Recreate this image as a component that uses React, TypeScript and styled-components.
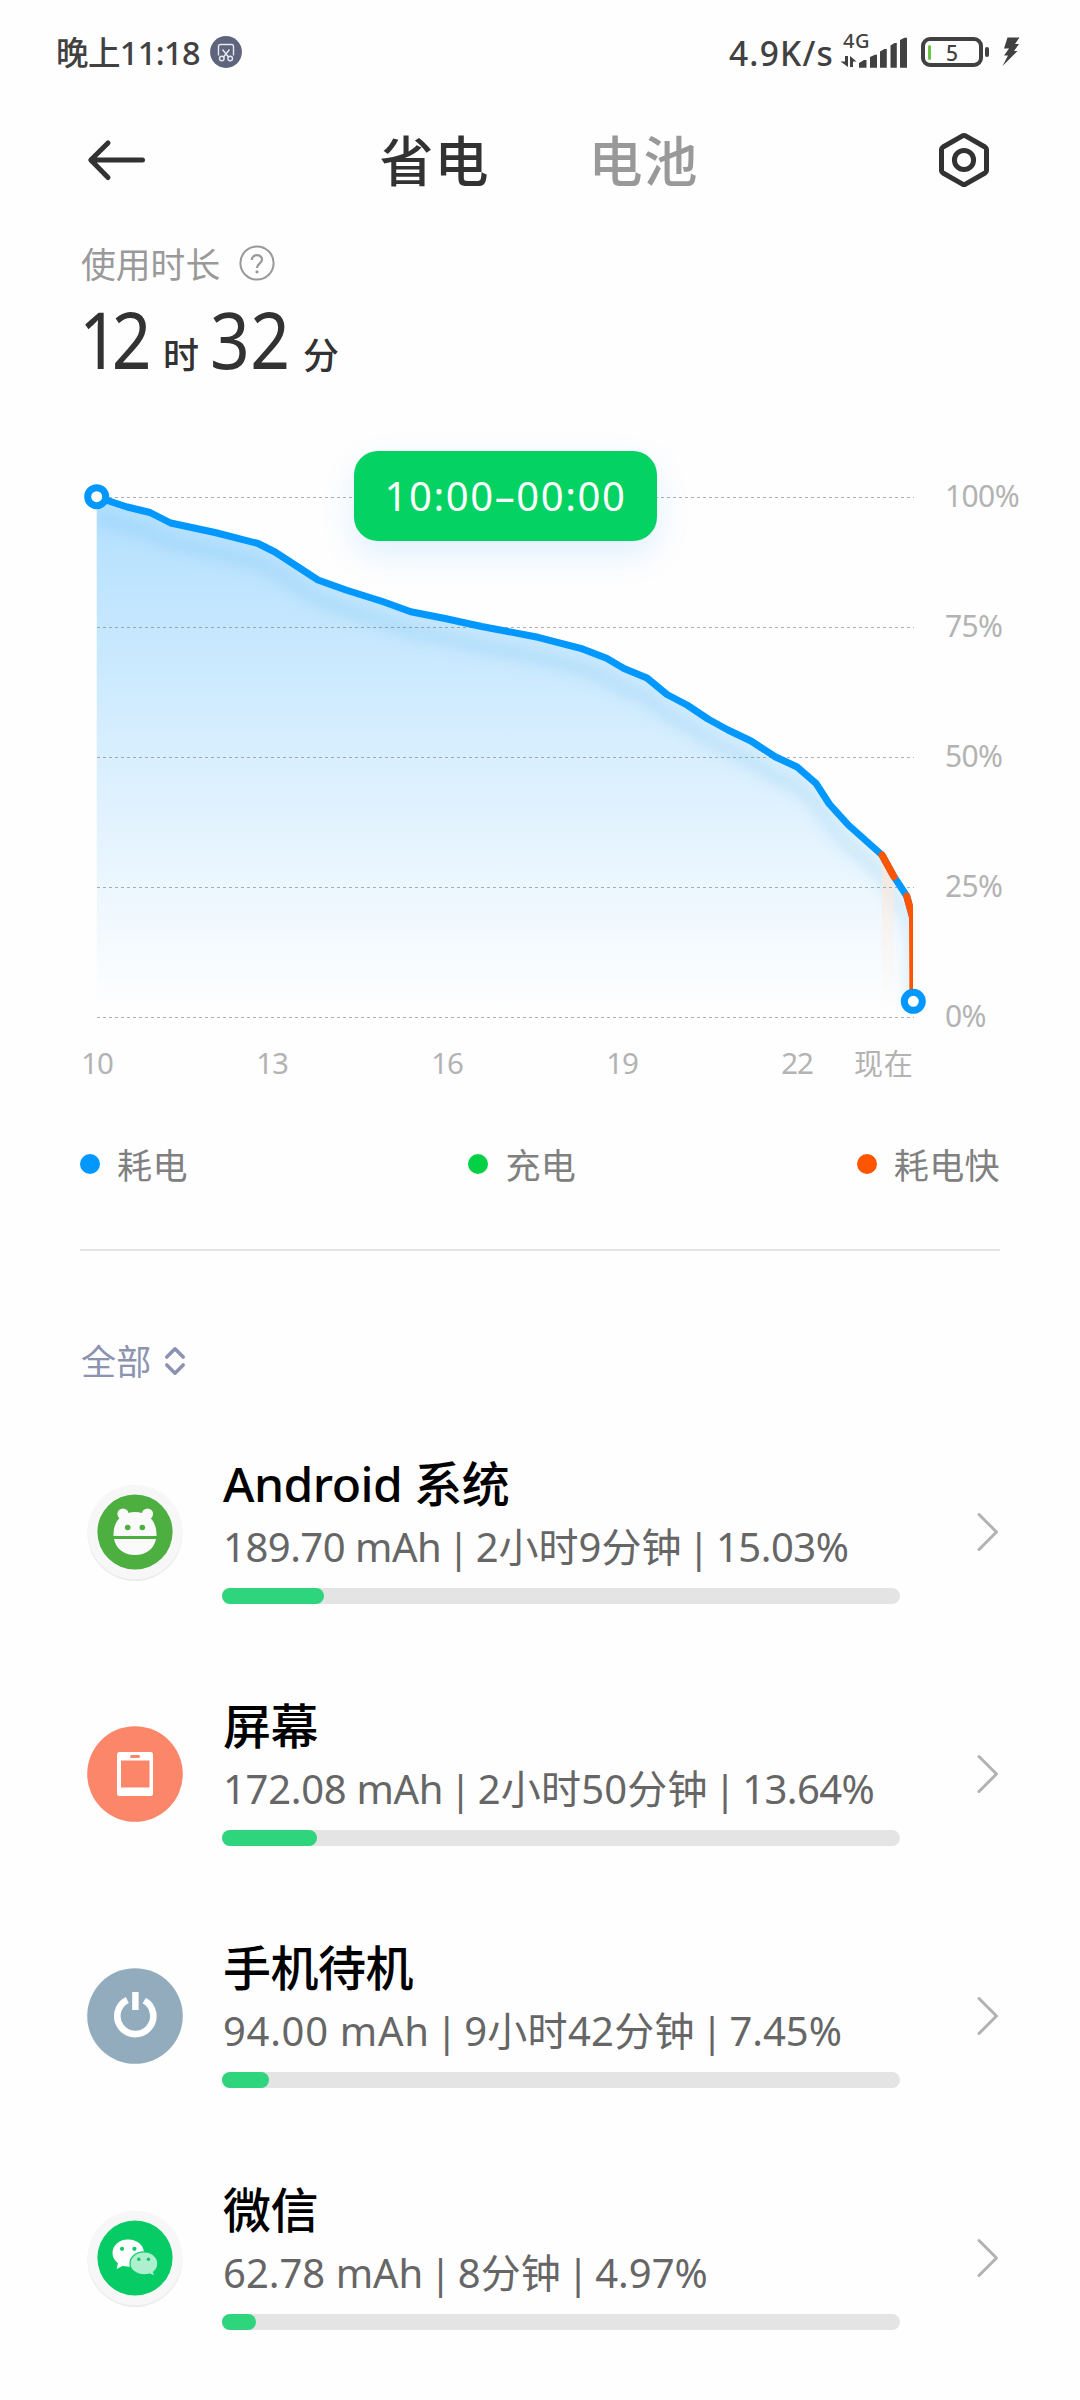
import React from "react";
import styled, { createGlobalStyle } from "styled-components";

const GlobalStyle = createGlobalStyle`
  * { box-sizing: border-box; }
  body { margin: 0; background: #fefefe; }
  svg { display: block; flex: none; }
`;

const Page = styled.main`
  width: 1080px;
  height: 2400px;
  overflow: hidden;
  background: #fefefe;
  color: #323232;
  font-family: "Noto Sans", "Noto Sans CJK SC", sans-serif;
  display: flex;
  flex-direction: column;
  white-space: nowrap;
`;

const StatusBar = styled.header`
  height: 104px;
  padding: 0 60px 0 56px;
  display: flex;
  align-items: center;
  color: #414141;
`;

const Clock = styled.span`
  display: flex;
  align-items: baseline;
  font-size: 32.5px;
  font-weight: 500;
  line-height: 40px;
  letter-spacing: -0.6px;
  padding-top: 2px;
  margin-right: 10px;
`;

const NetSpeed = styled.span`
  margin-left: auto;
  padding-top: 2px;
  font-size: 33.5px;
  font-weight: 500;
  line-height: 40px;
  letter-spacing: 1.2px;
  margin-right: 6px;
`;

const Signal = styled.div`
  position: relative;
  width: 68px;
  height: 36px;
  margin-right: 13px;
`;

const NetworkType = styled.span`
  position: absolute;
  left: 3px;
  top: -3px;
  font-size: 20px;
  line-height: 20px;
  font-weight: 500;
  letter-spacing: 0.6px;
`;

const Battery = styled.div`
  position: relative;
  width: 62px;
  height: 30px;
  border: 4px solid #414141;
  border-radius: 9px;
  display: flex;
  align-items: center;
  padding-left: 3px;
  margin-right: 19px;
  &::after {
    content: "";
    position: absolute;
    right: -10px;
    top: 6px;
    width: 4px;
    height: 10px;
    border-radius: 2px;
    background: #414141;
  }
`;

const Charge = styled.span`
  width: 3px;
  height: 15px;
  border-radius: 2px;
  background: #6cc644;
`;

const BatteryLevel = styled.span`
  margin-left: 15px;
  padding-top: 1px;
  font-size: 21px;
  line-height: 22px;
  font-weight: 500;
`;

const TopBar = styled.nav`
  height: 112px;
  padding: 0 90px 0 86px;
  display: flex;
  align-items: center;
  justify-content: space-between;
`;

const Tabs = styled.div`
  display: flex;
  gap: 99px;
  margin-left: -6px;
`;

const Tab = styled.span<{ $active?: boolean }>`
  font-size: 54px;
  line-height: 72px;
  padding-top: 2px;
  font-weight: 500;
  letter-spacing: 1px;
  color: ${(p) => (p.$active ? "#323232" : "#999999")};
`;

const Summary = styled.section`
  height: 214px;
  padding: 23px 80px 0 81px;
`;

const SummaryLabel = styled.div`
  height: 48px;
  display: flex;
  align-items: center;
  gap: 19px;
  color: #999999;
  font-size: 34.8px;
`;

const Duration = styled.div`
  display: flex;
  align-items: baseline;
  margin: 12px 0 0 -2px;
  line-height: 80px;
`;

const BigNumber = styled.span<{ $gap?: number; $tracking: number; $width: number }>`
  width: ${(p) => p.$width}px;
  font-size: 79px;
  font-weight: 400;
  letter-spacing: ${(p) => p.$tracking}px;
  margin-left: ${(p) => p.$gap ?? 0}px;
  transform: scaleX(0.88);
  transform-origin: left;
`;

const Unit = styled.span`
  font-size: 36px;
  font-weight: 500;
  margin-left: 16px;
`;

const ChartPanel = styled.section`
  position: relative;
  height: 610px;
  padding-left: 80px;
  display: flex;
`;

const PercentAxis = styled.div`
  display: grid;
  grid-template-rows: repeat(5, 130px);
  align-items: center;
  margin-left: 9px;
  padding-top: 1px;
  color: #b3b3b3;
  font-size: 30px;
  line-height: 40px;
  letter-spacing: -0.6px;
`;

const TimeTooltip = styled.div`
  position: absolute;
  left: 354px;
  top: 21px;
  width: 303px;
  height: 90px;
  border-radius: 24px;
  background: #04d263;
  color: #ffffff;
  font-size: 40px;
  line-height: 90px;
  letter-spacing: 1.6px;
  text-align: center;
  box-shadow: 0 14px 34px rgba(0, 140, 255, 0.12);
`;

const TimeAxis = styled.div`
  height: 46px;
  padding-left: 79px;
  display: flex;
  align-items: center;
  color: #b3b3b3;
  font-size: 29.5px;
  line-height: 40px;
`;

const Hour = styled.span`
  width: 36px;
  margin-right: 139px;
  text-align: center;
  letter-spacing: -1px;
  &:nth-of-type(5) { margin-right: 39px; }
`;

const Now = styled.span`
  font-size: 29px;
  padding-top: 1px;
  letter-spacing: 0.8px;
`;

const Legend = styled.div`
  height: 40px;
  margin: 58px 80px 0;
  display: flex;
  justify-content: space-between;
  align-items: center;
`;

const LegendItem = styled.span<{ $color: string }>`
  display: flex;
  align-items: center;
  gap: 17px;
  color: #808080;
  &::before {
    content: "";
    width: 20px;
    height: 20px;
    border-radius: 50%;
    background: ${(p) => p.$color};
  }
`;

const LegendText = styled.span`
  padding-top: 3px;
  font-size: 35px;
  line-height: 40px;
  letter-spacing: 0.4px;
`;

const Divider = styled.hr`
  width: 920px;
  height: 2px;
  margin: 65px 0 0 80px;
  border: 0;
  background: #e4e4e4;
`;

const Filter = styled.div`
  height: 60px;
  margin: 80px 0 20px 81px;
  display: flex;
  align-items: center;
  gap: 13px;
  font-size: 35px;
  line-height: 50px;
  color: #8c93b0;
`;

const FilterText = styled.span`
  padding-top: 1px;
  letter-spacing: 0.2px;
`;

const UsageList = styled.ul`
  list-style: none;
  margin: 0;
  padding: 0;
`;

const UsageRow = styled.li`
  height: 242px;
  padding: 0 80px 0 85px;
  display: flex;
  align-items: center;
`;

const UsageBody = styled.div`
  width: 678px;
  height: 156px;
  margin-left: 37px;
`;

const UsageName = styled.div`
  padding: 2px 0 0 1px;
  font-size: 48px;
  line-height: 56px;
  font-weight: 500;
  color: #000000;
  letter-spacing: -0.5px;
`;

const UsageDetail = styled.div`
  display: flex;
  margin-top: 11px;
  padding-left: 1px;
  font-size: 40px;
  line-height: 48px;
  color: #666666;
`;

const Segment = styled.span<{ $tracking: number }>`
  letter-spacing: ${(p) => p.$tracking}px;
`;

const Pipe = styled.span`
  width: 34.5px;
  display: flex;
  justify-content: center;
`;

const Track = styled.div`
  margin-top: 17px;
  height: 16px;
  border-radius: 8px;
  background: #e4e4e4;
`;

const Fill = styled.div`
  height: 16px;
  border-radius: 8px;
  background: #2ed57d;
`;

const RowArrow = styled.svg`
  margin-left: auto;
`;

const curve: [number, number][] = [
  [96.7, 497], [127.3, 507], [150, 512.5], [170.7, 523], [215, 532.5], [258, 543.5], [275, 552],
  [318, 580], [346, 590], [382.5, 601.5], [410.8, 611.7], [445, 618.5], [481.6, 626.5], [538, 637.3],
  [580.7, 648.3], [606.6, 658.3], [624, 668.5], [647, 678], [667, 694.5], [687, 705],
  [708, 719], [728, 730], [751, 741], [775.6, 757], [796.7, 766.7], [816, 783.3],
  [829.3, 804], [848.3, 825], [882, 855], [894, 876.7], [906.7, 896], [912.5, 917],
];
const line = curve.map((p) => p.join(",")).join(" ");

const BatteryChart = () => (
  <svg width="856" height="610" viewBox="80 430 856 610">
    <defs>
      <linearGradient id="area" gradientUnits="userSpaceOnUse" x1="0" y1="497" x2="0" y2="1010">
        <stop offset="0" stopColor="#0097ff" stopOpacity="0.3" />
        <stop offset="1" stopColor="#0097ff" stopOpacity="0" />
      </linearGradient>
      <linearGradient id="fast" gradientUnits="userSpaceOnUse" x1="0" y1="855" x2="0" y2="1010">
        <stop offset="0" stopColor="#ffe6d4" stopOpacity="0.8" />
        <stop offset="1" stopColor="#fff1ec" stopOpacity="0" />
      </linearGradient>
      <clipPath id="plot"><rect x="97" y="470" width="816" height="570" /></clipPath>
      <clipPath id="stroke"><rect x="90" y="470" width="823" height="570" /></clipPath>
      <filter id="soft" filterUnits="userSpaceOnUse" x="60" y="440" width="900" height="620">
        <feGaussianBlur stdDeviation="7" />
      </filter>
    </defs>
    <polygon points={`96.7,1017 ${line} 913,1017`} fill="url(#area)" />
    <g clipPath="url(#plot)">
      <polyline points={`${line} 912.5,990`} transform="translate(0 20)" fill="none" stroke="#4fb0e8" strokeOpacity="0.2" strokeWidth="12" filter="url(#soft)" />
    </g>
    <polygon points="882,855 894,876.7 894,1010 882,1010" fill="url(#fast)" />
    {[497.5, 627.5, 757.5, 887.5, 1017.5].map((y) => (
      <line key={y} x1="97" x2="914" y1={y} y2={y} stroke="#707070" strokeOpacity="0.55" strokeDasharray="3 3" />
    ))}
    <g clipPath="url(#stroke)" fill="none" strokeWidth="7" strokeLinejoin="round" strokeLinecap="round">
      <polyline points={line} stroke="#0097ff" />
      <polyline points="882,855 894,876.7" stroke="#ff5500" />
      <polyline points="906.7,896 912.5,917 912.9,992" stroke="#ff5500" />
    </g>
    <g fill="#ffffff" stroke="#0097ff" strokeWidth="7">
      <circle cx="96.7" cy="496.7" r="9" />
      <circle cx="913.3" cy="1001.3" r="9" />
    </g>
  </svg>
);

const SystemIcon = () => (
  <svg width="100" height="100" viewBox="-50 -50 100 100">
    <circle cy="1.5" r="47.5" fill="#ececec" />
    <circle r="47.3" fill="#f7f7f7" />
    <circle r="37.6" fill="#4caf3f" />
    <g fill="#fafafa">
      <circle cx="-12" cy="-18" r="5.6" />
      <circle cx="12.5" cy="-18" r="5.6" />
      <path d="M-21.5 4C-22 -11 -13 -20 0 -20S22 -11 21.5 4Z" />
      <path d="M-21 7H21C19 17 11 23 0 23S-19 17 -21 7Z" />
    </g>
    <circle cx="-7.3" cy="-4.5" r="2.8" fill="#4caf3f" />
    <circle cx="7.3" cy="-4.5" r="2.8" fill="#4caf3f" />
  </svg>
);

const ScreenIcon = () => (
  <svg width="100" height="100" viewBox="-50 -50 100 100">
    <circle r="47.8" fill="#fb8669" />
    <rect x="-18" y="-22" width="36" height="44" rx="2.5" fill="#ffffff" />
    <rect x="-14" y="-13.5" width="28.5" height="27" fill="#fb8669" />
    <rect x="-5" y="-19" width="10" height="3" rx="1.5" fill="#fb8669" />
  </svg>
);

const StandbyIcon = () => (
  <svg width="100" height="100" viewBox="-50 -50 100 100">
    <circle r="47.8" fill="#92acbe" />
    <path d="M-8 -16.3A18 18 0 1 0 9 -15.8" transform="translate(0.3 0.3)" fill="none" stroke="#ffffff" strokeWidth="6.6" />
    <rect x="-2.8" y="-24" width="6.4" height="18" fill="#ffffff" />
  </svg>
);

const WeChatIcon = () => (
  <svg width="100" height="100" viewBox="-50 -50 100 100">
    <circle cy="1.5" r="47.5" fill="#ececec" />
    <circle r="47.3" fill="#f7f7f7" />
    <circle r="37.6" fill="#07cc65" />
    <path d="M-7 -18.5C-16 -18.5 -22.5 -12.5 -22.5 -5C-22.5 -1 -20.5 2.6 -17 5.2L-18.5 11L-12 7.8C-10 8.5 -8.5 8.7 -6 8.7C3 8.7 9 3 9 -5S2 -18.5 -7 -18.5Z" fill="#ffffff" />
    <path d="M9 -6.2C17 -6.2 22.8 -1 22.8 5.5C22.8 9 21.2 12 18.5 14.1L20 18.2L14.5 16C12.5 16.6 11 16.8 9 16.8C1 16.8 -5 12 -5 5.5S1 -6.2 9 -6.2Z" fill="#aeefcf" stroke="#07cc65" strokeWidth="1.2" />
    <g fill="#07cc65">
      <circle cx="-13" cy="-9.2" r="2.1" />
      <circle cx="-0.6" cy="-9.2" r="2.1" />
      <circle cx="3.8" cy="1.3" r="1.7" />
      <circle cx="13.4" cy="1.3" r="1.7" />
    </g>
  </svg>
);

const usage = [
  { name: "Android 系统", charge: "189.70 mAh", time: "2小时9分钟", percent: "15.03", tracking: [-0.5, 0, -0.5], Icon: SystemIcon },
  { name: "屏幕", charge: "172.08 mAh", time: "2小时50分钟", percent: "13.64", tracking: [-0.3, 0.2, -0.6], Icon: ScreenIcon },
  { name: "手机待机", charge: "94.00 mAh", time: "9小时42分钟", percent: "7.45", tracking: [0.7, 0.3, 0], Icon: StandbyIcon },
  { name: "微信", charge: "62.78 mAh", time: "8分钟", percent: "4.97", tracking: [0, 0, 0], Icon: WeChatIcon },
];

export default function App() {
  return (
    <Page>
      <GlobalStyle />
      <StatusBar>
        <Clock>晚上11:18</Clock>
        <svg width="32" height="32" viewBox="0 0 32 32" fill="none" stroke="#e8eaf2" strokeWidth="1.4">
          <circle cx="16" cy="16" r="15.9" fill="#5d647c" stroke="none" />
          <path d="M8.500 19.500V10.500Q8.500 8.500 10.500 8.500H21.500Q23.500 8.500 23.500 10.500V19.500M12.500 13.500L18.500 21M19.500 13.500L13.500 21" />
          <circle cx="11.800" cy="22.500" r="2.300" />
          <circle cx="20.200" cy="22.500" r="2.300" />
        </svg>
        <NetSpeed>4.9K/s</NetSpeed>
        <Signal>
          <NetworkType>4G</NetworkType>
          <svg width="68" height="36" viewBox="840 34 68 36" fill="#414141">
            <path d="M845 56H848V67L840.500 61.500H845Z M850 67V56L856.500 61.500H853V67Z" />
            <path d="M859 63L864 60H866.500V67.700H859Z M870 57L875 54.700H877V67.700H870Z M880 51.500L884.500 49H886.800V67.700H880Z M890.500 45.500L894.500 43H896.800V67.700H890.500Z M900 40L904.500 37.700H907V67.700H900Z" />
          </svg>
        </Signal>
        <Battery>
          <Charge />
          <BatteryLevel>5</BatteryLevel>
        </Battery>
        <svg width="18" height="30" viewBox="0 0 18 30" fill="#414141">
          <path d="M5.500 0.500H17.500L13 7H17L12 14H15.500L0.500 29L6 18.500H2L7 11.500H2Z" />
        </svg>
      </StatusBar>

      <TopBar>
        <svg width="60" height="44" viewBox="0 0 60 44" fill="none" stroke="#323232" strokeWidth="5" strokeLinecap="round" strokeLinejoin="round">
          <path d="M56.500 22H5M22 5L4.800 22L22 39.500" />
        </svg>
        <Tabs>
          <Tab $active>省电</Tab>
          <Tab>电池</Tab>
        </Tabs>
        <svg width="52" height="56" viewBox="0 0 52 56" fill="none" stroke="#323232" strokeWidth="5" strokeLinejoin="round">
          <path d="M24.500 3.800Q26 3 27.500 3.800L47 15Q48.500 16 48.500 17.500V38.500Q48.500 40 47 41L27.500 52.200Q26 53 24.500 52.200L5 41Q3.500 40 3.500 38.500V17.500Q3.500 16 5 15Z" />
          <circle cx="26" cy="28" r="9.600" />
        </svg>
      </TopBar>

      <Summary>
        <SummaryLabel>
          使用时长
          <svg width="36" height="36" viewBox="0 0 36 36" fill="none" stroke="#999999" strokeWidth="2">
            <circle cx="18" cy="18" r="16.600" />
            <path d="M12.800 15C12.800 8.500 23.300 8.700 23 14.800C22.800 18.300 18 18.500 18 23" strokeWidth="2.300" />
            <circle cx="18" cy="26.800" r="1.600" fill="#999999" stroke="none" />
          </svg>
        </SummaryLabel>
        <Duration>
          <BigNumber $width={68} $tracking={-8}>12</BigNumber>
          <Unit>时</Unit>
          <BigNumber $width={77} $gap={11} $tracking={0.5}>32</BigNumber>
          <Unit>分</Unit>
        </Duration>
      </Summary>

      <ChartPanel>
        <BatteryChart />
        <PercentAxis>
          <span>100%</span>
          <span>75%</span>
          <span>50%</span>
          <span>25%</span>
          <span>0%</span>
        </PercentAxis>
        <TimeTooltip>10:00–00:00</TimeTooltip>
      </ChartPanel>
      <TimeAxis>
        <Hour>10</Hour>
        <Hour>13</Hour>
        <Hour>16</Hour>
        <Hour>19</Hour>
        <Hour>22</Hour>
        <Now>现在</Now>
      </TimeAxis>

      <Legend>
        <LegendItem $color="#0097ff"><LegendText>耗电</LegendText></LegendItem>
        <LegendItem $color="#03d045"><LegendText>充电</LegendText></LegendItem>
        <LegendItem $color="#ff5500"><LegendText>耗电快</LegendText></LegendItem>
      </Legend>
      <Divider />

      <Filter>
        <FilterText>全部</FilterText>
        <svg width="22" height="32" viewBox="0 0 22 32" fill="none" stroke="#8c93b0" strokeWidth="3.600" strokeLinecap="round" strokeLinejoin="round">
          <path d="M2.800 12L11 3.800L19.200 12M2.800 20L11 28.200L19.200 20" />
        </svg>
      </Filter>

      <UsageList>
        {usage.map(({ name, charge, time, percent, tracking, Icon }) => (
          <UsageRow key={name}>
            <Icon />
            <UsageBody>
              <UsageName>{name}</UsageName>
              <UsageDetail>
                <Segment $tracking={tracking[0]}>{charge}</Segment>
                <Pipe>|</Pipe>
                <Segment $tracking={tracking[1]}>{time}</Segment>
                <Pipe>|</Pipe>
                <Segment $tracking={tracking[2]}>{percent}%</Segment>
              </UsageDetail>
              <Track>
                <Fill style={{ width: `${Math.round(Number(percent))}%` }} />
              </Track>
            </UsageBody>
            <RowArrow width="24" height="42" viewBox="0 0 24 42" fill="none" stroke="#b2b2b2" strokeWidth="3" strokeLinecap="round" strokeLinejoin="round">
              <path d="M3 3.500L20.500 21L3 38.500" />
            </RowArrow>
          </UsageRow>
        ))}
      </UsageList>
    </Page>
  );
}
